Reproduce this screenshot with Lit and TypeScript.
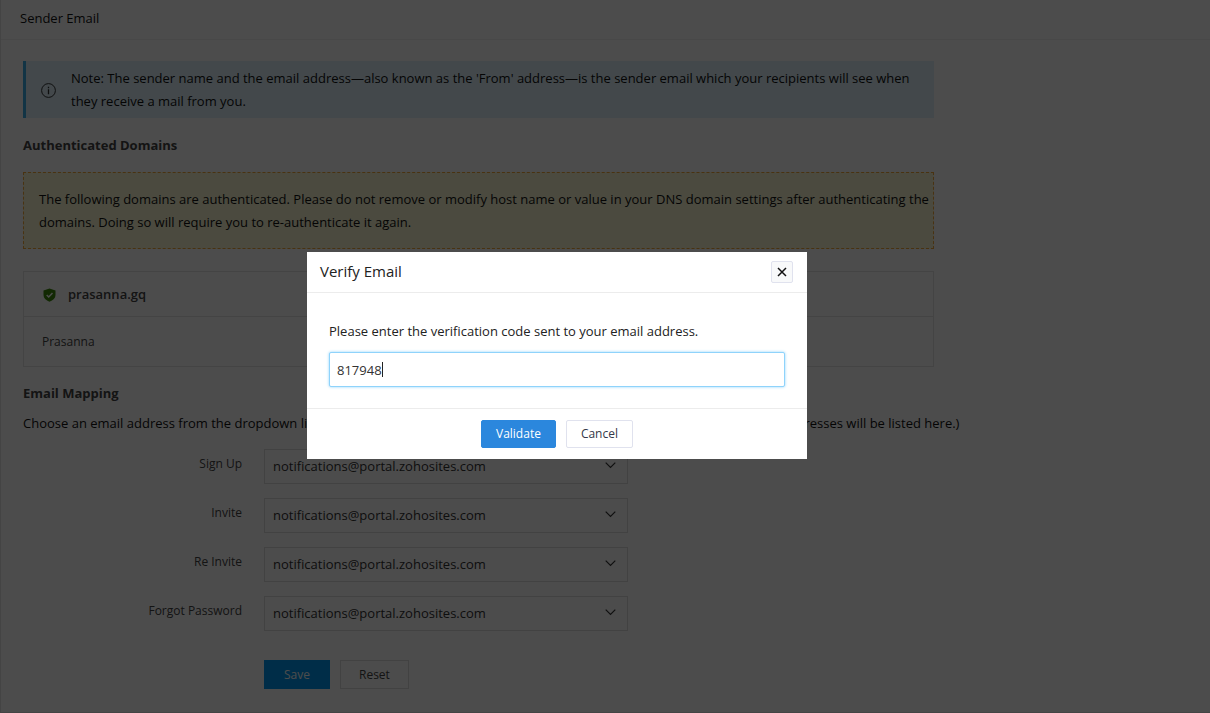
import { LitElement, html, css } from "lit";
import { customElement } from "lit/decorators.js";

const SENDER = "notifications@portal.zohosites.com";
const ROWS = ["Sign Up", "Invite", "Re Invite", "Forgot Password"];

@customElement("app-root")
export class AppRoot extends LitElement {
  static styles = css`
    :host { display: block; font-family: "Open Sans", "Liberation Sans", sans-serif; font-size: 13px; line-height: 23px; color: #111; }
    * { box-sizing: border-box; }
    button, input, select { font: inherit; color: inherit; margin: 0; }
    h1, h2, p { margin: 0; font-weight: 400; }
    .page { min-height: 100vh; background: #fff; border-left: 1px solid #e4e4e4; border-bottom: 1px solid #e4e4e4; }
    .top { padding: 7px 19px 9px; border-bottom: 1px solid #f1f1f1; }
    .top h1 { font-size: 13px; }
    .content { padding: 21px 22px 23px; }
    .block { max-width: 911px; }
    .note { display: flex; align-items: center; gap: 15px; padding: 6px 0 5px 15px; background: #dff2fc; border-left: 3px solid #3fb0e8; }
    .note p { padding-right: 10px; }
    .note svg { flex: none; }
    .heading { font-size: 13px; font-weight: 700; color: #444; margin: 16px 0 15px; }
    .warn { padding: 15px 0 14px 15px; border: 1px dashed #f5a93a; background: #faf8d4; }
    .domain { margin-top: 22px; border: 1px solid #e4e4e4; color: #444; }
    .domain-name { display: flex; align-items: center; gap: 12px; padding: 11px 19px 10px; font-weight: 600; border-bottom: 1px solid #e4e4e4; }
    .domain-owner { padding: 13px 18px; font-size: 12px; }
    .heading.mapping { margin: 15px 0 7px; }
    .form { display: grid; grid-template-columns: 219px minmax(0, 364px); column-gap: 22px; row-gap: 14px; margin-top: 14px; }
    .form label { text-align: right; font-size: 12px; color: #444; padding-top: 3px; }
    .select { position: relative; display: grid; }
    .select select { appearance: none; height: 35px; padding: 0 32px 0 8px; border: 1px solid #dcdcdc; border-radius: 0; background: transparent; color: #333; font-size: 13px; }
    .select svg { position: absolute; right: 12px; top: 13px; pointer-events: none; }
    .actions { grid-column: 2; display: flex; gap: 10px; margin-top: 15px; }
    .btn { height: 29px; min-width: 66px; padding: 0 18px; border: 1px solid #dcdcdc; background: transparent; font-size: 12px; line-height: 20px; color: #444; }
    .save { background: #0098f0; border-color: #0098f0; color: #fff; }
    .overlay { position: fixed; inset: 0; display: flex; justify-content: center; align-items: flex-start; padding: 252px 96px 0 0; background: rgba(0, 0, 0, 0.7); }
    .dialog { width: 500px; max-width: 100%; background: #fff; color: #222; }
    .dialog-head { display: flex; align-items: center; justify-content: space-between; padding: 8px 14px 9px 13px; border-bottom: 1px solid #ececec; }
    .dialog-head h2 { font-size: 15px; }
    .close { display: grid; place-items: center; width: 22px; height: 22px; padding: 0; border: 1px solid #e0e2ee; border-radius: 2px; background: #f8f9fa; }
    .dialog-body { padding: 27px 22px 21px; border-bottom: 1px solid #ececec; }
    .dialog-body label { display: block; margin-bottom: 9px; }
    .field { position: relative; display: grid; }
    .field input { height: 35px; padding: 0 7px; border: 1px solid #8fd3fb; border-radius: 2px; outline: none; box-shadow: 0 0 3px #8fd3fb; background: #fff; color: #333; caret-color: transparent; }
    .caret { position: absolute; left: 53px; top: 10px; width: 1px; height: 15px; background: #222; }
    .dialog-foot { display: flex; justify-content: center; gap: 10px; padding: 11px 0; }
    .dialog-foot .btn { height: 28px; padding: 0 14px; border-radius: 2px; border-color: #e0e2ee; background: #fff; color: #333849; }
    .dialog-foot .validate { background: #2b87dd; border-color: #2b87dd; color: #fff; }
  `;

  render() {
    return html`
      <main class="page">
        <header class="top"><h1>Sender Email</h1></header>
        <div class="content">
          <div class="note block">
            <svg width="15" height="15" viewBox="0 0 15 15" fill="none" stroke="#333"><circle cx="7.5" cy="7.5" r="6.9"/><path d="M7.5 6.3v4.9M7.5 3.8v1.4" stroke-width="1.3"/></svg>
            <p>Note: The sender name and the email address—also known as the 'From' address—is the sender email which your recipients will see when they receive a mail from you.</p>
          </div>
          <h2 class="heading">Authenticated Domains</h2>
          <p class="warn block">The following domains are authenticated. Please do not remove or modify host name or value in your DNS domain settings after authenticating the domains. Doing so will require you to re-authenticate it again.</p>
          <section class="domain block">
            <div class="domain-name">
              <svg width="13" height="14" viewBox="0 0 13 14"><path d="M6.5.4 12.5 2.6V7c0 3-2.4 5.4-6 6.8C2.9 12.4.5 10 .5 7V2.6Z" fill="#3c8a0c"/><path d="m3.7 7 2 2 3.8-4" fill="none" stroke="#fff" stroke-width="1.5"/></svg>
              prasanna.gq
            </div>
            <div class="domain-owner">Prasanna</div>
          </section>
          <h2 class="heading mapping">Email Mapping</h2>
          <p>Choose an email address from the dropdown list for all the following emails. (Note: Only the verified and authenticated email addresses will be listed here.)</p>
          <form class="form" @submit=${(e: Event) => e.preventDefault()}>
            ${ROWS.map((r, i) => html`
              <label for="m${i}">${r}</label>
              <div class="select">
                <select id="m${i}"><option>${SENDER}</option></select>
                <svg width="11" height="7" viewBox="0 0 11 7" fill="none" stroke="#333" stroke-width="1.2"><path d="m.7.7 4.8 4.8L10.3.7"/></svg>
              </div>`)}
            <div class="actions">
              <button class="btn save" type="submit">Save</button>
              <button class="btn" type="reset">Reset</button>
            </div>
          </form>
        </div>
      </main>
      <div class="overlay">
        <section class="dialog" role="dialog" aria-modal="true" aria-labelledby="title">
          <header class="dialog-head">
            <h2 id="title">Verify Email</h2>
            <button class="close" type="button" aria-label="Close"><svg width="10" height="10" viewBox="0 0 10 10" stroke="#111" stroke-width="1.5"><path d="m1 1 8 8M9 1 1 9"/></svg></button>
          </header>
          <div class="dialog-body">
            <label for="code">Please enter the verification code sent to your email address.</label>
            <div class="field"><input id="code" type="text" inputmode="numeric" value="817948"><span class="caret"></span></div>
          </div>
          <footer class="dialog-foot">
            <button class="btn validate" type="button">Validate</button>
            <button class="btn" type="button">Cancel</button>
          </footer>
        </section>
      </div>
    `;
  }
}
